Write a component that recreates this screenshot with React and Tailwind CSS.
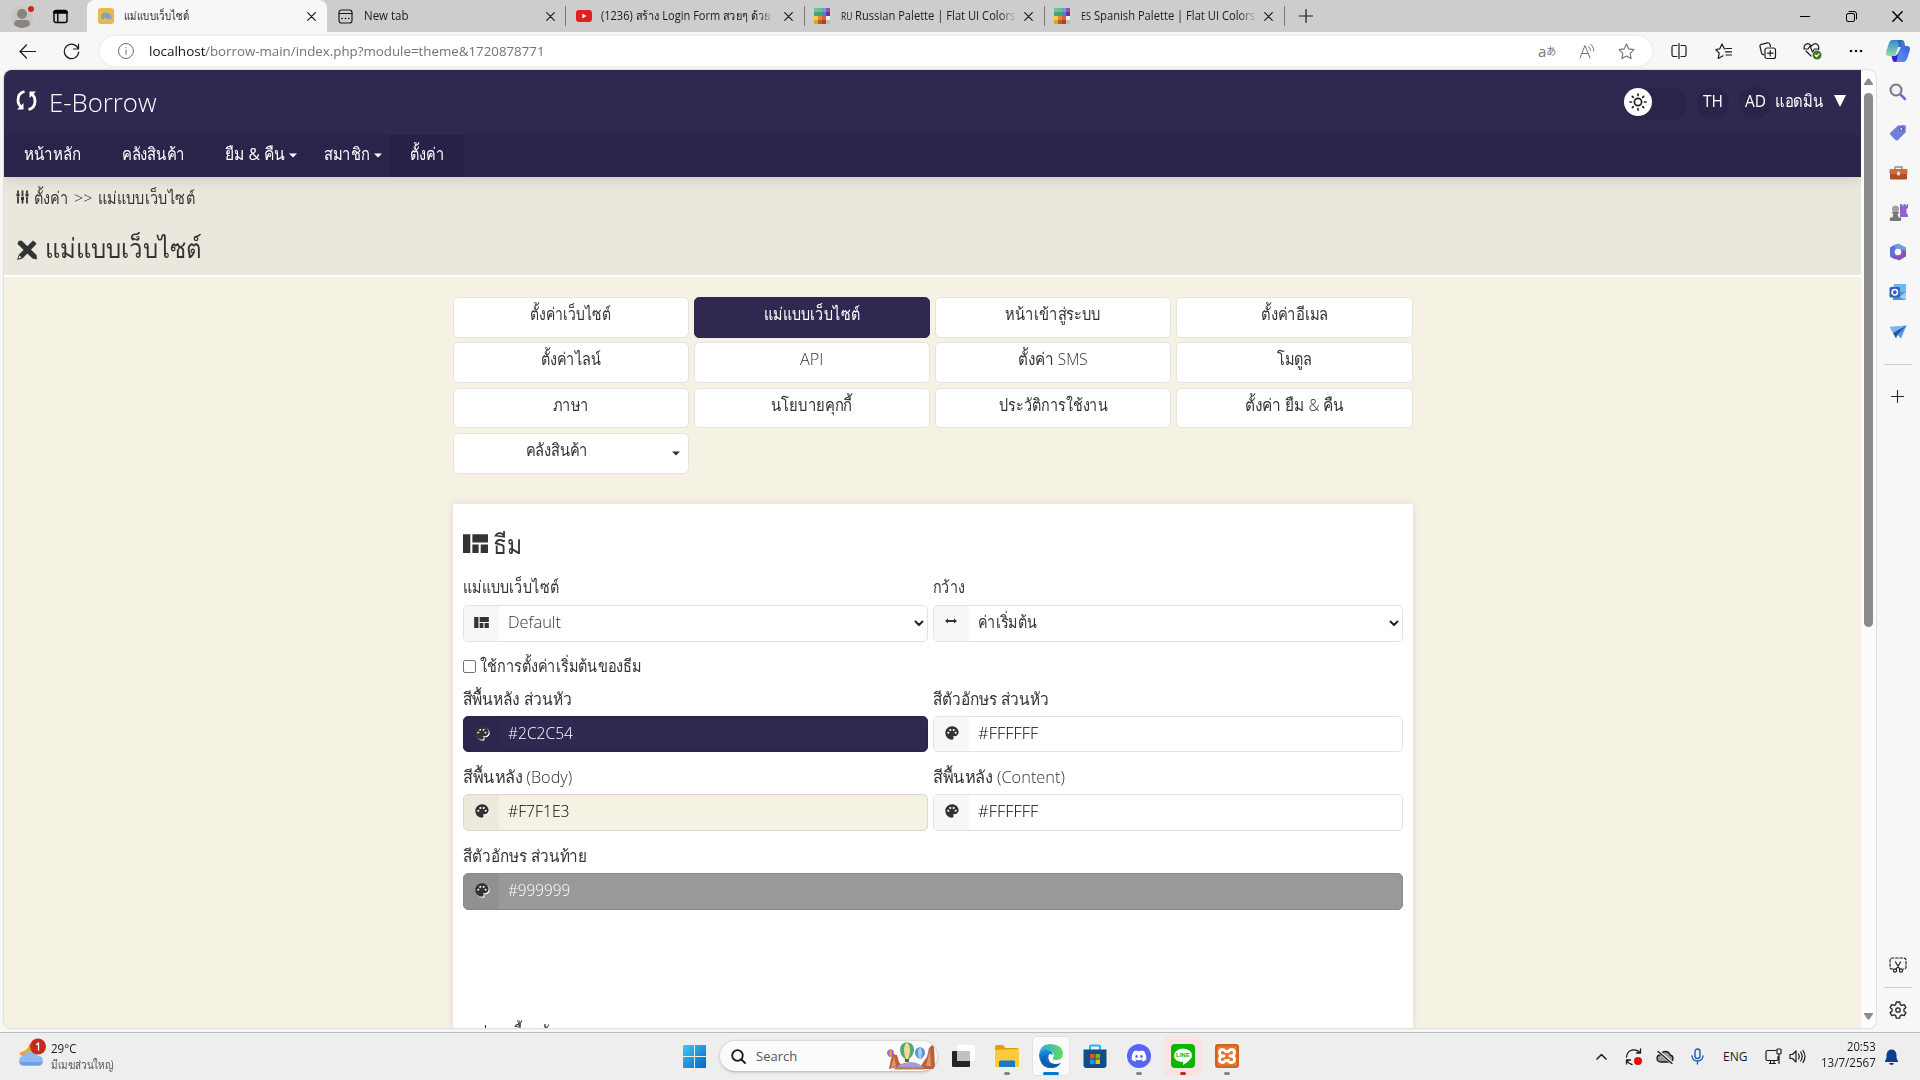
import React, { useLayoutEffect, useRef } from "react";
import { MdPalette } from "react-icons/md";
import { FaDiscord } from "react-icons/fa";

/* One line of text fitted to a fixed width */
function T({ w, children, className = "" }) {
  const ref = useRef(null);
  useLayoutEffect(() => {
    const el = ref.current;
    const fit = () => {
      el.style.transform = "none";
      const n = el.offsetWidth;
      if (n) el.style.transform = `scaleX(${w / n})`;
    };
    fit();
    document.fonts?.ready.then(fit);
  }, [w]);
  return (
    <span className={"inline-block shrink-0 whitespace-pre " + className} style={{ width: w }}>
      <span ref={ref} className="inline-block origin-left">{children}</span>
    </span>
  );
}

function Svg({ w = 16, h, vb, className = "", children, sw = 1.2 }) {
  const hh = h ?? w;
  return (
    <svg width={w} height={hh} viewBox={vb ?? `0 0 ${w} ${hh}`} className={"block shrink-0 " + className} fill="none" stroke="currentColor" strokeWidth={sw} strokeLinecap="round" strokeLinejoin="round">
      {children}
    </svg>
  );
}

const Close = ({ s = 9, className = "" }) => (
  <Svg w={s} vb="0 0 9 9" className={className}><path d="M.7.7l7.6 7.6M8.3.7L.7 8.3" /></Svg>
);

const Caret = ({ className = "" }) => (
  <Svg w={8} h={5} className={className}><path d="M0 .5h8L4 4.5z" fill="currentColor" stroke="none" /></Svg>
);

function PaletteFavicon() {
  const c = ["#6cc3a8", "#6cc664", "#65a3e0", "#8a55bd", "#4e9e85", "#51a05c", "#4a86c8", "#6a3596", "#f0cf4a", "#e58a2c", "#d85b45", "#eeeeee", "#dba234", "#c8581c", "#b03f2c", "#b9bdc1"];
  return (
    <div className="grid h-4 w-4 shrink-0 grid-cols-4">
      {c.map((x, i) => <i key={i} className="h-1 w-1" style={{ background: x }} />)}
    </div>
  );
}

function TabBar() {
  return (
    <div className="flex h-8 items-center bg-[#cdcdcd] text-xs leading-8 text-[#1b1b1b]">
      <Svg w={24} className="ml-[11px]" sw={0}>
        <circle cx="11" cy="13" r="11" fill="#c9c6bd" />
        <circle cx="11" cy="10" r="5" fill="#868583" />
        <path d="M3 21q0-5 4-5h8q4 0 4 5-8 6-16 0z" fill="#868583" />
        <circle cx="20" cy="5" r="3" fill="#c42b1c" />
      </Svg>
      <Svg w={15} className="ml-[18px] text-black" sw={1.4}><rect x="1" y="1.5" width="13" height="12" rx="2" /><path d="M1.5 3.3h12" strokeWidth="3" /><path d="M4.8 4v9" /></Svg>
      <div className="ml-[19px] flex h-8 w-[240px] items-center rounded-t-lg bg-[#f7f7f7] pl-[11px]">
        <Svg w={16} sw={0}>
          <rect width="16" height="16" rx="3" fill="#e6b84e" />
          <path d="M3.5 11V7.5Q4 4.500 7.500 4.500q4.500 0 5.500 3.500l.5 3q-1.500.5-2-1L11 8.500V11H8.500L8 9.500H6.500L6 11z" fill="#7fa3b8" />
        </Svg>
        <T w={65} className="ml-2.5">แม่แบบเว็บไซต์</T>
        <Close className="ml-[118px]" />
      </div>
      <Svg w={15} className="ml-[11px]"><rect x="1" y="1" width="13" height="13" rx="2.500" /><path d="M1 4.500h13" /><path d="M4 9.500h.2M7.400 9.500h.2M10.800 9.500h.2" strokeWidth="1.600" /></Svg>
      <T w={44} className="ml-[11px]">New tab</T>
      <Close className="ml-[138px]" />
      <i className="ml-[10px] h-5 w-px bg-[#777]" />
      <Svg w={16} h={12} className="ml-[10px]" sw={0}><rect width="16" height="12" rx="3" fill="#e02020" /><path d="M6.300 3.500v5l4.200-2.500z" fill="#fff" /></Svg>
      <div className="ml-[9px] w-[174px] mask-r-from-90%"><T w={170}>(1236) สร้าง Login Form สวยๆ ด้วย</T></div>
      <Close className="ml-[9px]" />
      <i className="ml-[11px] h-5 w-px bg-[#777]" />
      <div className="ml-[9px]"><PaletteFavicon /></div>
      <div className="ml-[11px] flex w-[176px] mask-r-from-90%"><T w={11} className="text-[10px]">RU</T><T w={160} className="ml-[3px]">Russian Palette | Flat UI Colors</T></div>
      <Close className="ml-[7px]" />
      <i className="ml-[11px] h-5 w-px bg-[#777]" />
      <div className="ml-[9px]"><PaletteFavicon /></div>
      <div className="ml-[11px] flex w-[176px] mask-r-from-90%"><T w={10} className="text-[10px]">ES</T><T w={161} className="ml-[3px]">Spanish Palette | Flat UI Colors</T></div>
      <Close className="ml-[7px]" />
      <i className="ml-[11px] h-5 w-px bg-[#777]" />
      <Svg w={14} className="ml-[14px]"><path d="M7 .5v13M.5 7h13" /></Svg>
      <div className="ml-auto flex items-center pr-[17px] text-black">
        <Svg w={10}><path d="M0 5.500h10" strokeWidth="1" /></Svg>
        <Svg w={11} className="ml-9" sw={1}><rect x=".5" y="2.500" width="8" height="8" rx="1.500" /><path d="M3 .5h5q2.500 0 2.500 2.500v5" /></Svg>
        <Close s={11} className="ml-[35px]" />
      </div>
    </div>
  );
}

function Copilot() {
  return (
    <Svg w={24} h={22} sw={0}>
      <defs>
        <linearGradient id="cp1" x1="0" y1="0" x2="0" y2="1"><stop offset="0" stopColor="#3b86d8" /><stop offset="1" stopColor="#8de0a0" /></linearGradient>
        <linearGradient id="cp2" x1="0" y1="1" x2="1" y2="0"><stop offset="0" stopColor="#5c9df5" /><stop offset="1" stopColor="#3a5fe0" /></linearGradient>
      </defs>
      <path d="M6 0h10l-5 16H3q-4 0-2.600-5L3 3Q4 0 6 0z" fill="url(#cp1)" />
      <path d="M18 22H8l5-16h8q4 0 2.600 5L21 19q-1 3-3 3z" fill="url(#cp2)" />
      <path d="M11 0h5q2 0 2.500 3l.7 3H15l-2 5-2 5H9l4-12z" fill="#2462ad" opacity=".85" />
      <path d="M15 7l-5 10H8.500L12 7z" fill="#fff" opacity=".9" />
      <path d="M5.500 16H9q2 0 3-3l-1 7q-.5 2-2 2-2 0-2.500-2z" fill="#3420d0" />
    </Svg>
  );
}

function Toolbar() {
  return (
    <div className="flex h-[38px] items-center bg-[#f7f7f7] text-[#1b1b1b]">
      <Svg w={17} h={15} className="ml-[19px]"><path d="M16.500 7.500H1M7.500 1L1 7.500 7.500 14" /></Svg>
      <Svg w={17} className="ml-[27px]"><path d="M15.300 6A7.200 7.200 0 1 0 15.700 9M15.500 1v5h-5" /></Svg>
      <div className="ml-5 flex h-[30px] w-[1552px] items-center rounded-full bg-white pl-[18px] shadow-[0_0_4px_rgba(0,0,0,0.08)]">
        <Svg w={16} className="text-[#6f6f6f]" sw={1}><circle cx="8" cy="8" r="7.500" /><path d="M8 7v4.500M8 4.500v.3" /></Svg>
        <div className="ml-[15px] flex text-[13px] leading-[30px] text-[#737373]">
          <T w={56} className="text-[#111]">localhost</T>
          <T w={340}>/borrow-main/index.php?module=theme&amp;1720878771</T>
        </div>
        <div className="ml-auto flex items-center pr-[17px] text-[#757575]">
          <div className="flex w-[18px] items-center leading-none"><span className="text-[15px] leading-4">a</span><span className="font-['Noto_Sans_CJK_JP'] text-[10px]">あ</span></div>
          <Svg w={17} className="ml-[23px]" sw={1}><path d="M1 15L6 2.500 11 15M2.800 10.500h6.400M9.500 3.500q2 1.500 2 4M11.500 1.500q3.500 2 3.300 6.500" /></Svg>
          <Svg w={17} h={17} className="ml-[22px]" sw={1.1}><path d="M8.500 1l2.300 4.900 5.200.7-3.800 3.700.9 5.300-4.600-2.500-4.600 2.500.9-5.300L1 6.600l5.200-.7z" /></Svg>
        </div>
      </div>
      <Svg w={16} className="ml-[19px]"><path d="M6 2.500H2.500Q1 2.500 1 4v8q0 1.500 1.500 1.500H6M10 2.500h3.500Q15 2.500 15 4v8q0 1.500-1.500 1.500H10M8 .5v15" /></Svg>
      <Svg w={17} className="ml-7"><path d="M10 6H9.500L7 1 4.800 5.800.8 6.500l3.400 3.600-1 5.400L8 12.800M11 5.500h5.500M10.500 8.800h6M11 12h5.500" /></Svg>
      <Svg w={18} className="ml-[27px]"><path d="M5 12.500Q3 13 2.600 11L1 4.500Q.7 2.800 2.300 2.300L8.500.8Q10 .5 10.800 2l.6 2.500" /><rect x="6" y="6" width="10.500" height="10.500" rx="2" /><path d="M11.200 8.500v5.500M8.500 11.200H14" /></Svg>
      <Svg w={19} className="ml-[26px]"><path d="M8 14L3 9M1.300 7Q.5 4 2.600 2.400 5.500.5 8.500 4q3-3.500 5.900-1.600Q16.300 4 15.500 7.500M1 7h4l2-3 2.500 6 2-3H15" /><circle cx="14" cy="13" r="4.500" fill="#3c7a1c" stroke="none" /><path d="M12 13l1.500 1.500L16 12" stroke="#fff" /></Svg>
      <Svg w={14} h={4} className="ml-[27px]" sw={0}><circle cx="2" cy="2" r="1.300" fill="#111" /><circle cx="7" cy="2" r="1.300" fill="#111" /><circle cx="12" cy="2" r="1.300" fill="#111" /></Svg>
      <div className="ml-[23px]"><Copilot /></div>
    </div>
  );
}

function NavItem({ w, children, ml, caret, className = "" }) {
  return (
    <div className={"flex h-[42px] items-center " + ml + " " + className}>
      <T w={w} className="-mt-1 text-[17px] leading-[42px]">{children}</T>
      {caret && <Caret className="-mt-0.5 ml-[4px]" />}
    </div>
  );
}

function Header() {
  return (
    <header className="relative z-10 text-white shadow-[0_4px_12px_rgba(0,0,0,0.10)]">
      <div className="flex h-[65px] items-center bg-[#302851]">
        <Svg w={21} className="-mt-1 ml-3" sw={2.8}>
          <path d="M8.500 1.500Q2 3 2 10q0 5 4 7.500" strokeLinecap="butt" /><path d="M1 19.500h6.500V13z" fill="#fff" stroke="none" />
          <path d="M12.500 19.500Q19 18 19 11q0-5-4-7.500" strokeLinecap="butt" /><path d="M20 1.500h-6.500V8z" fill="#fff" stroke="none" />
        </Svg>
        <T w={108} className="ml-3 text-[26px] leading-[65px] font-light">E-Borrow</T>
        <div className="mt-0.5 ml-auto flex h-8 w-[63px] items-center rounded-full bg-[#29244a]">
          <div className="-mt-1 grid h-7 w-7 place-items-center rounded-full bg-white text-[#222]">
            <Svg w={18} sw={1.700}>
              <circle cx="9" cy="9" r="3.600" />
              <path d="M9 1v1.500M9 15.500V17M1 9h1.500M15.500 9H17M3.300 3.300l1 1M13.700 13.700l1 1M3.300 14.700l1-1M13.700 4.300l1-1" />
            </Svg>
          </div>
        </div>
        <div className="ml-2.5 grid h-8 w-8 place-items-center rounded-full bg-[#29244a]"><T w={20} className="-mt-1 text-[17px] leading-8">TH</T></div>
        <div className="ml-2.5 grid h-8 w-8 place-items-center rounded-full bg-[#29244a]"><T w={21} className="-mt-1 text-[17px] leading-8">AD</T></div>
        <T w={48} className="-mt-1 ml-1 text-[17px] leading-8">แอดมิน</T>
        <Svg w={12} className="-mt-1 mr-[15px] ml-[11px]"><path d="M0 0h12L6 12z" fill="#fff" stroke="none" /></Svg>
      </div>
      <nav className="flex h-[42px] bg-[#29244a]">
        <NavItem w={57} ml="ml-5">หน้าหลัก</NavItem>
        <NavItem w={63} ml="ml-[41px]">คลังสินค้า</NavItem>
        <NavItem w={60} ml="ml-10" caret>ยืม &amp; คืน</NavItem>
        <NavItem w={46} ml="ml-[27px]" caret>สมาชิก</NavItem>
        <NavItem w={34} ml="ml-2" className="w-[74px] bg-[#272145] pl-5">ตั้งค่า</NavItem>
      </nav>
    </header>
  );
}

function PageTitle() {
  return (
    <div className="h-[100px] border-b-2 border-white bg-[#eae8dc] pl-3 text-[#333]">
      <div className="flex h-11 items-center">
        <Svg w={13} h={14} className="-mt-1" sw={1.800}><path d="M2 .5v3M2 7v6.500M6.500.5v6M6.500 10v3.500M11 .5v3M11 7v6.500" strokeLinecap="butt" /><path d="M.5 5h3M5 8.500h3M9.500 5h3" strokeWidth="2.800" strokeLinecap="butt" /></Svg>
        <T w={34} className="-mt-0.5 ml-[5px] text-[17px] leading-[44px] font-light">ตั้งค่า</T>
        <T w={18} className="-mt-0.5 ml-1.5 text-[17px] leading-[44px] font-light">&gt;&gt;</T>
        <T w={97} className="-mt-0.5 ml-1.5 text-[17px] leading-[44px] font-light">แม่แบบเว็บไซต์</T>
      </div>
      <div className="flex h-[54px] items-center">
        <Svg w={22} h={20} sw={0} className="mt-1">
          <path d="M2.500 1L5.500.5 20.500 15l.5 4.500-4.500-1L1.500 4z" fill="#333" />
          <path d="M19.500 2.500L17 .5 3 14.500 1 20l5.500-1.500L20.500 4z" fill="#333" />
          <path d="M2.500 18.500l1-3 2 2z" fill="#eae8dc" />
        </Svg>
        <T w={157} className="ml-[7px] text-[27px] leading-[54px] font-light">แม่แบบเว็บไซต์</T>
      </div>
    </div>
  );
}

const MENU = [
  ["ตั้งค่าเว็บไซต์", 81], ["แม่แบบเว็บไซต์", 96], ["หน้าเข้าสู่ระบบ", 96], ["ตั้งค่าอีเมล", 67],
  ["ตั้งค่าไลน์", 60], ["API", 23], ["ตั้งค่า SMS", 70], ["โมดูล", 35],
  ["ภาษา", 36], ["นโยบายคุกกี้", 81], ["ประวัติการใช้งาน", 109], ["ตั้งค่า ยืม & คืน", 99],
];

function MenuGrid() {
  return (
    <div className="mx-auto grid w-[960px] grid-cols-4 gap-x-[5px] gap-y-[4.9px] pt-5">
      {MENU.map(([t, w], i) => (
        <div key={t} className={"h-[40.5px] rounded-[5px] border text-center text-[17px] leading-[32px] font-light " + (i === 1 ? "border-[#302851] bg-[#302851] text-white" : "border-[#e5e4e2] bg-white text-[#333]")}>
          <T w={w}>{t}</T>
        </div>
      ))}
      <div className="flex h-[40.5px] items-center rounded-[5px] border border-[#e5e4e2] bg-white pr-2 pl-[72px] text-[17px] font-light text-[#333]">
        <T w={62} className="-mt-1.5 leading-[32px]">คลังสินค้า</T>
        <Caret className="ml-auto" />
      </div>
    </div>
  );
}

const Dash = ({ w }) => (
  <Svg w={w} h={Math.round(w * 0.75)} vb="0 0 24 18" sw={0}><path d="M0 0h7v18H0zM9 0h15v8H9zM9 10h6v8H9zM17 10h7v8h-7z" fill="#333" /></Svg>
);

function Field({ label, lw, children, className = "" }) {
  return (
    <div className={className}>
      <div className="h-[26px] text-[17px] leading-[25px] font-light text-[#333]"><T w={lw}>{label}</T></div>
      {children}
    </div>
  );
}

function Box({ icon, text, tw, look = "bg-white border-[#e2e2e2] text-black", cell = "bg-[#f7f7f7]", select, h = "h-[37px]" }) {
  return (
    <div className={"flex items-center overflow-hidden rounded-[5px] border text-[17px] font-light " + h + " " + look}>
      <div className={"grid h-full w-[35px] place-items-center text-[#333] " + cell}>{icon}</div>
      <T w={tw} className="-mt-0.5 ml-[9px] leading-[34px]">{text}</T>
      {select && <Svg w={10} h={7} className="mr-[3px] ml-auto text-[#222]" sw={2}><path d="M1.500 1.500L5 5l3.500-3.500" /></Svg>}
    </div>
  );
}

const Pal = () => <MdPalette className="-mt-0.5 ml-px block h-4 w-4 drop-shadow-[1px_1px_0_#ffffff]" />;

function ThemeCard() {
  return (
    <section className="mx-auto mt-[30.3px] h-[524px] w-[960px] overflow-hidden bg-white px-2.5 pt-5 shadow-[0_0_8px_rgba(0,0,0,0.10)]">
      <div className="flex h-10 items-center">
        <Dash w={25} />
        <T w={29} className="ml-[5px] text-[27px] leading-10 font-light text-[#333]">ธีม</T>
      </div>
      <div className="grid grid-cols-[465px_470px] gap-x-[5px] pt-2.5">
        <Field label="แม่แบบเว็บไซต์" lw={96}>
          <div className="pt-[5px]"><Box icon={<div className="-mt-0.5"><Dash w={15} /></div>} text="Default" tw={53} select look="bg-white border-[#e2e2e2] text-[#333]" /></div>
        </Field>
        <Field label="กว้าง" lw={32}>
          <div className="pt-[5px]"><Box icon={<Svg w={12} h={6} className="-mt-1" sw={0}><path d="M0 3l3-2.500V2h6V.5L12 3 9 5.500V4H3v1.500z" fill="#333" /></Svg>} text="ค่าเริ่มต้น" tw={59} select look="bg-white border-[#e2e2e2] text-[#333]" /></div>
        </Field>
      </div>
      <div className="flex h-11 items-center pt-1">
        <i className="mt-0.5 h-[13px] w-[13px] rounded-[2px] border border-[#767676] bg-white" />
        <T w={161} className="ml-1 text-[17px] leading-[30px] font-light text-[#333]">ใช้การตั้งค่าเริ่มต้นของธีม</T>
      </div>
      <div className="grid grid-cols-[465px_470px] gap-x-[5px]">
        <Field label="สีพื้นหลัง ส่วนหัว" lw={109}>
          <div className="pt-1"><Box h="h-9" icon={<Pal />} text="#2C2C54" tw={65} look="bg-[#302851] border-[#2b2449] text-white" cell="bg-[#2e264d]" /></div>
        </Field>
        <Field label="สีตัวอักษร ส่วนหัว" lw={116}>
          <div className="pt-1"><Box h="h-9" icon={<Pal />} text="#FFFFFF" tw={60} /></div>
        </Field>
      </div>
      <div className="grid grid-cols-[465px_470px] gap-x-[5px] pt-3">
        <Field label="สีพื้นหลัง (Body)" lw={109}>
          <div className="pt-1"><Box icon={<Pal />} text="#F7F1E3" tw={62} look="bg-[#f5f1e3] border-[#dcd9cc] text-black" cell="bg-[#ede9dd]" /></div>
        </Field>
        <Field label="สีพื้นหลัง (Content)" lw={132}>
          <div className="pt-1"><Box icon={<Pal />} text="#FFFFFF" tw={60} /></div>
        </Field>
      </div>
      <Field label="สีตัวอักษร ส่วนท้าย" lw={124} className="pt-3">
        <div className="pt-1"><Box icon={<Pal />} text="#999999" tw={62} look="bg-[#999] border-[#898989] text-white" cell="bg-[#919191]" /></div>
      </Field>
      <div className="pt-[109px] pl-2 text-[17px] leading-[26px] font-light text-[#333]"><T w={85}>รูปภาพพื้นหลัง</T></div>
    </section>
  );
}

function Page() {
  return (
    <div className="ml-1 flex h-[958px] w-[1872px] overflow-hidden rounded-lg bg-white shadow-[0_0_2px_rgba(0,0,0,0.35)]">
      <div className="h-full w-[1857px] overflow-hidden bg-[#f5f1e3]">
        <Header />
        <PageTitle />
        <MenuGrid />
        <ThemeCard />
      </div>
      <div className="flex w-[15px] flex-col items-center bg-[#fcfcfc] pt-2">
        <Svg w={9} h={7} sw={0}><path d="M3.700.5h1.600L9 6v1H0V6z" fill="#8b8b8b" /></Svg>
        <div className="mt-2 h-[534px] w-[9px] rounded-full bg-[#8b8b8b]" />
        <Svg w={9} h={7} sw={0} className="mt-auto mb-2"><path d="M3.700 6.500h1.600L9 1V0H0v1z" fill="#8b8b8b" /></Svg>
      </div>
    </div>
  );
}

function Sidebar() {
  return (
    <aside className="ml-auto flex h-[962px] w-[43px] flex-col items-center bg-[#f7f7f7] pr-[1px] text-[#222]">
      <Svg w={18} className="mt-[13px]" sw={2}><path d="M11.500 11.500l4.500 4.500" stroke="#9b57d3" strokeWidth="2.600" /><circle cx="7" cy="7" r="5.500" stroke="#777" fill="#eef1f5" /></Svg>
      <Svg w={18} className="mt-[23px]" sw={0}><path d="M9 1.500L15 1q2 0 2 2l-.5 5.500L9 16q-1.300 1-2.500 0L1.500 11q-1-1.300 0-2.500z" fill="#6f7fdd" /><circle cx="12.500" cy="5" r="1.700" fill="#e3e6fb" stroke="#3d4690" strokeWidth="1" /></Svg>
      <Svg w={19} h={16} className="mt-[23px]" sw={0}><path d="M6 4V2h7v2" stroke="#8b8f94" strokeWidth="1.500" /><rect x=".5" y="4" width="18" height="5" rx="1" fill="#cf6a3e" /><path d="M1 9h17v4.500q0 1-1 1H2q-1 0-1-1z" fill="#b64c22" /><rect x="8" y="6.500" width="3" height="4" rx="1" fill="#dedede" /></Svg>
      <Svg w={19} className="mt-[22px]" sw={0}><path d="M11 1h2v1.500h1.500V1h2v1.500H18V1h1v4l-1.500 1v4l1.500 2v2h-8z" fill="#9163cf" /><circle cx="6.500" cy="6" r="3.500" fill="#a2a2a2" /><path d="M3 9h7v1.500H8.500l1 4H12q.8 2-.5 3.500H1.500Q0 16 1 14.500h2.500l1-4H3z" fill="#757575" /></Svg>
      <Svg w={18} className="mt-[21px]" sw={0}><path d="M6 1.500L1 4.500v9l5 3 1.500-4V6z" fill="#5b72d9" /><path d="M6 1.500L9.500.5 17 4.500v6l-5-3.500-5.500-1z" fill="#6f9de0" /><path d="M17 8v5.500l-7 4L2 14l4-1.500 5-1 1-5z" fill="#8753bb" /><circle cx="9" cy="9" r="3.300" fill="#f7f7f7" /></Svg>
      <Svg w={18} className="mt-[22px]" sw={0}><rect x="4.500" y="1" width="12.500" height="10" rx="1" fill="#6bb7ee" /><path d="M4 9l13 0v7q0 1-1 1H4z" fill="#4a92dc" /><path d="M17 9l-7 5 7 3z" fill="#9bd0f5" /><rect x=".5" y="4" width="10.500" height="10.500" rx="1.500" fill="#2f62bd" /><circle cx="5.800" cy="9.200" r="2.700" stroke="#fff" strokeWidth="1.500" /></Svg>
      <Svg w={18} h={16} className="mt-[23px]" sw={0}><path d="M.5 3L17.500 1.500 12 14.500z" fill="#5b9de0" /><path d="M.5 3l3.500 6L17.500 1.500z" fill="#7cb7ea" /><path d="M17.500 1.500L4 9l3 5.500 1.500-4z" fill="#2753a0" /></Svg>
      <i className="mt-6 h-px w-7 bg-[#ccc]" />
      <Svg w={13} className="mt-[25px] mr-px" sw={1.1}><path d="M6.500.5v12M.5 6.500h12" /></Svg>
      <Svg w={18} className="mt-auto"><path d="M3.500 13Q1 13 1 11V4.500Q1 2 3.500 2h11Q17 2 17 4.500V11q0 2-2.500 2" strokeDasharray="2.500 1.800" /><path d="M6.500 6l4.500 7.500M11.500 6L7 13.500" /><circle cx="6" cy="14.500" r="1.600" /><circle cx="12" cy="14.500" r="1.600" /></Svg>
      <i className="mt-[13px] h-px w-7 bg-[#ccc]" />
      <Svg w={18} className="mt-[13px] mb-[13px]" sw={1.300}><path d="M7.300 1h3.400l.6 2.600 1.400.8 2.500-.8 1.700 2.900-2 1.800v1.600l2 1.800-1.700 2.900-2.500-.8-1.400.8-.6 2.600H7.300l-.6-2.600-1.400-.8-2.500.8-1.700-2.900 2-1.800V8.300l-2-1.800 1.700-2.900 2.500.8 1.400-.8z" /><circle cx="9" cy="9" r="2.200" /></Svg>
    </aside>
  );
}

function Balloons() {
  return (
    <Svg w={48} h={28} sw={0}>
      <path d="M2 27l2-10 2-5 4 1 2 7 3 4zM32 27l5-8 3-4 2-9 3-3 2 2 1 19-2 3z" fill="#b8613f" />
      <path d="M4 26l3-12 2 10zM39 24l4-17 1 17z" fill="#e09267" />
      <path d="M14 22q10-4 18 0l4 3H10z" fill="#a79ada" />
      <path d="M9 25h27l2 2.500H7z" fill="#c97a4e" />
      <path d="M20 0q7 1 7 8 0 5-5 9h-4q-5-4-5-9 0-7 7-8z" fill="#4fa880" />
      <path d="M20 0q3 3 3 8 0 5-2 9h-2q-2-4-2-9 0-5 3-8z" fill="#f2dc8c" />
      <rect x="18" y="17" width="4" height="3" fill="#8a5132" />
      <path d="M33 5q5 1 5 6 0 3-4 6h-2q-4-3-4-6 0-5 5-6z" fill="#5b93d8" />
      <path d="M33 5q2 2 2 6l-1 6h-2l-1-6q0-4 2-6z" fill="#a7cdf2" />
      <path d="M3.500 7Q7 8 7 11q0 2-2.500 4h-2Q0 13 0 11q0-3 3.500-4z" fill="#9e60c8" />
      <path d="M3.500 7Q5 9 5 11l-1 4H3l-1-4q0-2 1.500-4z" fill="#ef9149" />
    </Svg>
  );
}

const Dot = ({ c = "bg-[#858585] w-1.5" }) => <i className={"h-[3px] rounded-full " + c} />;

function TaskIcon({ children, tile = "", dot, ml = "ml-1.5 mt-[3px]" }) {
  return (
    <div className={"flex h-10 w-[38px] flex-col items-center rounded " + ml + " " + tile}>
      <div className="mt-2 mb-1 h-6">{children}</div>
      {dot}
    </div>
  );
}

function Taskbar() {
  return (
    <div className="flex h-12 border-t border-[#bcbcbc] bg-[#eee] text-xs text-[#1b1b1b]">
      <div className="flex h-[47px] w-[683px] items-center pl-[19px]">
        <Svg w={28} h={29} sw={0} className="-mt-2">
          <path d="M10 5q1 7-10 10 2 4 8 4l8-7z" fill="#f1a42e" />
          <path d="M5 28q-5 0-5-5t5-5q2-6 8-5 5 1 6 5 5 0 5 5t-5 5z" fill="#8fb8f0" />
          <path d="M5 27q-4 0-4.500-3h23q-.5 3-4.500 3z" fill="#6f9ce6" />
          <circle cx="19" cy="8.500" r="8" fill="#c42b1c" />
          <path d="M17.500 6.500l2-1.500v7" stroke="#fff" strokeWidth="1.300" />
        </Svg>
        <div className="ml-1 flex flex-col leading-4"><T w={25}>29°C</T><T w={62} className="text-[#555]">มีเมฆส่วนใหญ่</T></div>
      </div>
      <Svg w={23} className="mt-3" sw={0}>
        <defs><linearGradient id="win" x1="0" y1="0" x2="1" y2="1"><stop offset="0" stopColor="#45c5f7" /><stop offset="1" stopColor="#0067bf" /></linearGradient></defs>
        <path d="M1 0h10v11H0V1q0-1 1-1zM12 0h10q1 0 1 1v10H12zM0 12h11v11H1q-1 0-1-1zM12 12h11v10q0 1-1 1H12z" fill="url(#win)" />
      </Svg>
      <div className="mt-[7px] ml-[13px] flex h-8 w-[219px] items-center rounded-full border border-[#dcdcdc] border-b-[#c4c4c4] bg-[#fbfbfb] pl-[11px] shadow-sm">
        <Svg w={15} sw={1.800}><circle cx="6.500" cy="6.500" r="5.300" /><path d="M10.500 10.500l3.500 3.500" /></Svg>
        <T w={41} className="ml-2.5 text-[13px] leading-7 text-[#555]">Search</T>
        <div className="ml-auto pr-0.5"><Balloons /></div>
      </div>
      <TaskIcon><Svg w={24} sw={0}><rect x="1" y="7" width="18" height="16" rx="1" fill="#252525" /><rect x="6" y="1" width="18" height="16" rx="1" fill="#fff" opacity=".95" /><rect x="6" y="7" width="13" height="10" fill="#c1c1c1" /></Svg></TaskIcon>
      <TaskIcon dot={<Dot />}><Svg w={24} sw={0}><path d="M0 3q0-2 2-2h6l2.500 3H22q2 0 2 2v17H0z" fill="#e0a106" /><path d="M0 6l24-1v18H0z" fill="#fcca3d" /><path d="M4 23v-5q0-1.500 1.500-1.500h13q1.500 0 1.500 1.500v5z" fill="#127bd1" /></Svg></TaskIcon>
      <TaskIcon tile="bg-[#fafafa] ring-1 ring-[#e2e2e2] ring-inset" dot={<Dot c="bg-[#0078d4] w-4" />}>
        <Svg w={24} sw={0}>
          <defs>
            <linearGradient id="ed1" x1="0" y1="0" x2="1" y2="0"><stop offset="0" stopColor="#2aa5e4" /><stop offset="1" stopColor="#66dd5a" /></linearGradient>
            <linearGradient id="ed2" x1="0" y1="0" x2="0" y2="1"><stop offset="0" stopColor="#1c8fe0" /><stop offset="1" stopColor="#0a4fa3" /></linearGradient>
          </defs>
          <path d="M0 11Q1 0 12 0q12 1 12 10 0 6-7 6-4 0-3-2.500 2-2 0-5Q7 3 0 11z" fill="url(#ed1)" />
          <path d="M0 11Q3 5 9 6q5 1 5 5-3-2-4.500.5-1 8 6.500 8.500 4 0 6-1.500Q19 24 12 24 1 23 0 11z" fill="url(#ed2)" />
          <path d="M9 10q-4 4-1 9 3 4 8 4-8 3-13-3-3-7 6-10z" fill="#0b63b8" />
        </Svg>
      </TaskIcon>
      <TaskIcon><Svg w={24} sw={0}><path d="M7 6V2.500Q7 1.500 8 1.500h8q1 0 1 1V6" stroke="#22b7f2" strokeWidth="2" /><path d="M.5 5.500h23V21q0 3-3 3h-17q-3 0-3-3z" fill="#124d86" /><path d="M7 10h4.500v4.500H7z" fill="#f25022" /><path d="M12.500 10H17v4.500h-4.500z" fill="#7fba00" /><path d="M7 15.500h4.500V20H7z" fill="#00a4ef" /><path d="M12.500 15.500H17V20h-4.500z" fill="#ffb900" /></Svg></TaskIcon>
      <TaskIcon dot={<Dot />}><div className="grid h-6 w-6 place-items-center rounded-full bg-[#5865f2] text-white"><FaDiscord className="h-4 w-4" /></div></TaskIcon>
      <TaskIcon tile="bg-[#fbe3e3]" dot={<Dot c="bg-[#c42b1c] w-1.5" />}>
        <div className="relative grid h-6 w-6 place-items-center rounded-[4px] bg-[#06b900]">
          <Svg w={20} sw={0}><path d="M10 2.500q9 .5 9 7.500-.5 4-9 9v-3Q1 15.500 1 10q.5-7 9-7.500z" fill="#fff" /></Svg>
          <span className="absolute top-[7px] left-[5px] font-['Liberation_Sans'] text-[6px] leading-[8px] font-bold text-[#06b900]">LINE</span>
        </div>
      </TaskIcon>
      <TaskIcon dot={<Dot />}><Svg w={24} sw={0}><rect width="24" height="24" rx="3" fill="#e8742a" /><rect x="1" y="1" width="22" height="22" rx="2" stroke="#b85413" strokeWidth="1" /><path d="M9 12H7.500Q4.500 11.500 4.500 8.500T7.500 5.500q2 0 3 2h3q1-2 3-2 3 0 3 3t-3 3.500H15h1.500q3 .5 3 3.500t-3 3-3-2h-3q-1 2-3 2-3 0-3-3T7.500 12z" stroke="#fff" strokeWidth="2.800" /></Svg></TaskIcon>
      <div className="ml-auto flex h-[47px] items-center">
        <Svg w={11} h={7} sw={1.500}><path d="M1 6l4.500-4.500L10 6" /></Svg>
        <Svg w={18} className="ml-[18px]" sw={1.300}><path d="M1.500 9Q2 3.500 7 2q5-1 8.500 3V1M15.500 5h-4M1.500 16v-4h4M2 12.500Q4 16 7 16.500" /><circle cx="13" cy="13" r="4" fill="#f00" stroke="none" /></Svg>
        <Svg w={18} className="ml-[13px]" sw={1.300}><path d="M5 14q-4 0-4-3.500T4.500 7Q6 3.500 9.500 3.500T14 7q3 .5 3 3.500T14 14z" fill="#999" /><path d="M2 3l14 12" stroke="#eee" strokeWidth="3" /><path d="M2 3.500l14 12" /></Svg>
        <Svg w={13} h={17} className="ml-[17px] text-[#1f5fb8]" sw={1.400}><rect x="4" y="1" width="5" height="9.500" rx="2.500" /><path d="M1 8q.5 5 5.500 5T12 8M6.500 13v3" /></Svg>
        <T w={24} className="ml-[19px] leading-4">ENG</T>
        <Svg w={17} className="ml-[18px]" sw={1.200}><path d="M11 2.500H2.500Q1 2.500 1 4v7q0 1.500 1.500 1.500h9q1.500 0 1.500-1.500V8.500M4.500 15.500h6M5.500 13v2M9 13v2M14 6v9.500" /><rect x="12" y="1" width="4" height="5" rx="1" /></Svg>
        <Svg w={17} h={15} className="ml-[7px]" sw={1.200}><path d="M1 5.500h2.500L7 2v11L3.500 9.500H1zM9.500 5q1.500 2.500 0 5M11.700 3q3 4.500 0 9M14 1.500q4 6 0 12" /></Svg>
        <div className="-mt-1 ml-3.5 flex w-[56px] flex-col items-end leading-4"><T w={29}>20:53</T><T w={55}>13/7/2567</T></div>
        <Svg w={13} h={16} className="mr-[22px] ml-[9px]" sw={0}><path d="M0 12l1.500-3V6q.5-5.500 5-5.500t5 5.500v3l1.500 3v1H0zM4 14h5q-.5 2-2.500 2T4 14z" fill="#0a3f91" /></Svg>
      </div>
    </div>
  );
}

export default function App() {
  return (
    <div className="h-[1080px] w-[1920px] overflow-hidden bg-[#f7f7f7] font-['Open_Sans','Noto_Sans',sans-serif]">
      <TabBar />
      <Toolbar />
      <div className="flex h-[962px]">
        <Page />
        <Sidebar />
      </div>
      <Taskbar />
    </div>
  );
}
